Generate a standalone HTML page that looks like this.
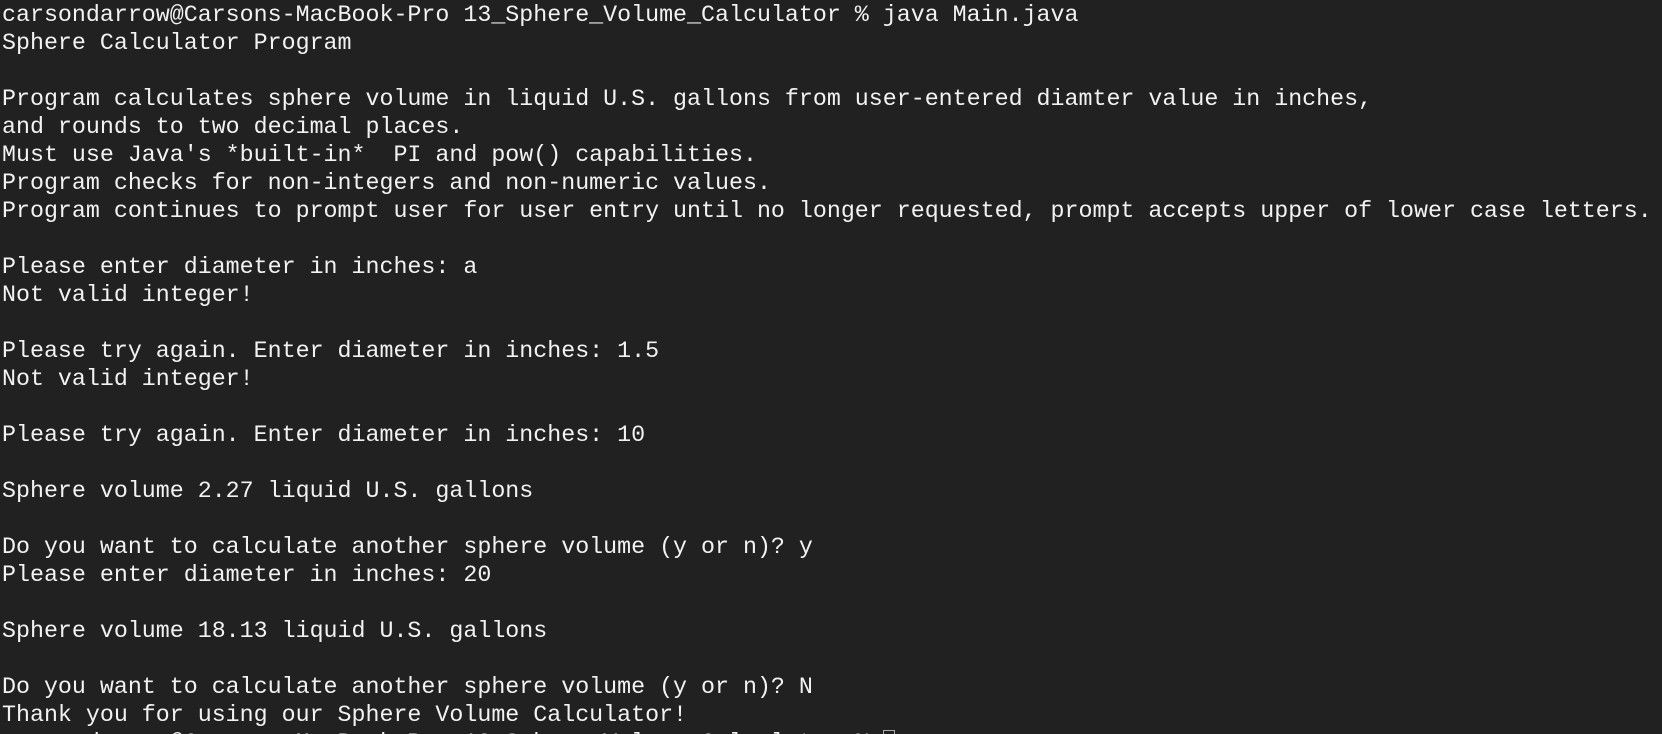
<!DOCTYPE html>
<html><head><meta charset="utf-8"><style>
html,body{margin:0;padding:0;background:#212121;width:1662px;height:734px;overflow:hidden}
pre{margin:0;padding:1px 0 0 2px;font-family:"Liberation Mono",monospace;font-size:23.3px;line-height:28px;color:#f2f2f2;white-space:pre}
.cur{display:inline-block;width:12px;height:24px;border:1px solid #aaa;box-sizing:border-box;vertical-align:-5px}
</style></head><body><pre>carsondarrow@Carsons-MacBook-Pro 13_Sphere_Volume_Calculator % java Main.java
Sphere Calculator Program

Program calculates sphere volume in liquid U.S. gallons from user-entered diamter value in inches,
and rounds to two decimal places.
Must use Java's *built-in*  PI and pow() capabilities.
Program checks for non-integers and non-numeric values.
Program continues to prompt user for user entry until no longer requested, prompt accepts upper of lower case letters.

Please enter diameter in inches: a
Not valid integer!

Please try again. Enter diameter in inches: 1.5
Not valid integer!

Please try again. Enter diameter in inches: 10

Sphere volume 2.27 liquid U.S. gallons

Do you want to calculate another sphere volume (y or n)? y
Please enter diameter in inches: 20

Sphere volume 18.13 liquid U.S. gallons

Do you want to calculate another sphere volume (y or n)? N
Thank you for using our Sphere Volume Calculator!
carsondarrow@Carsons-MacBook-Pro 13_Sphere_Volume_Calculator % <span class="cur"></span></pre></body></html>
